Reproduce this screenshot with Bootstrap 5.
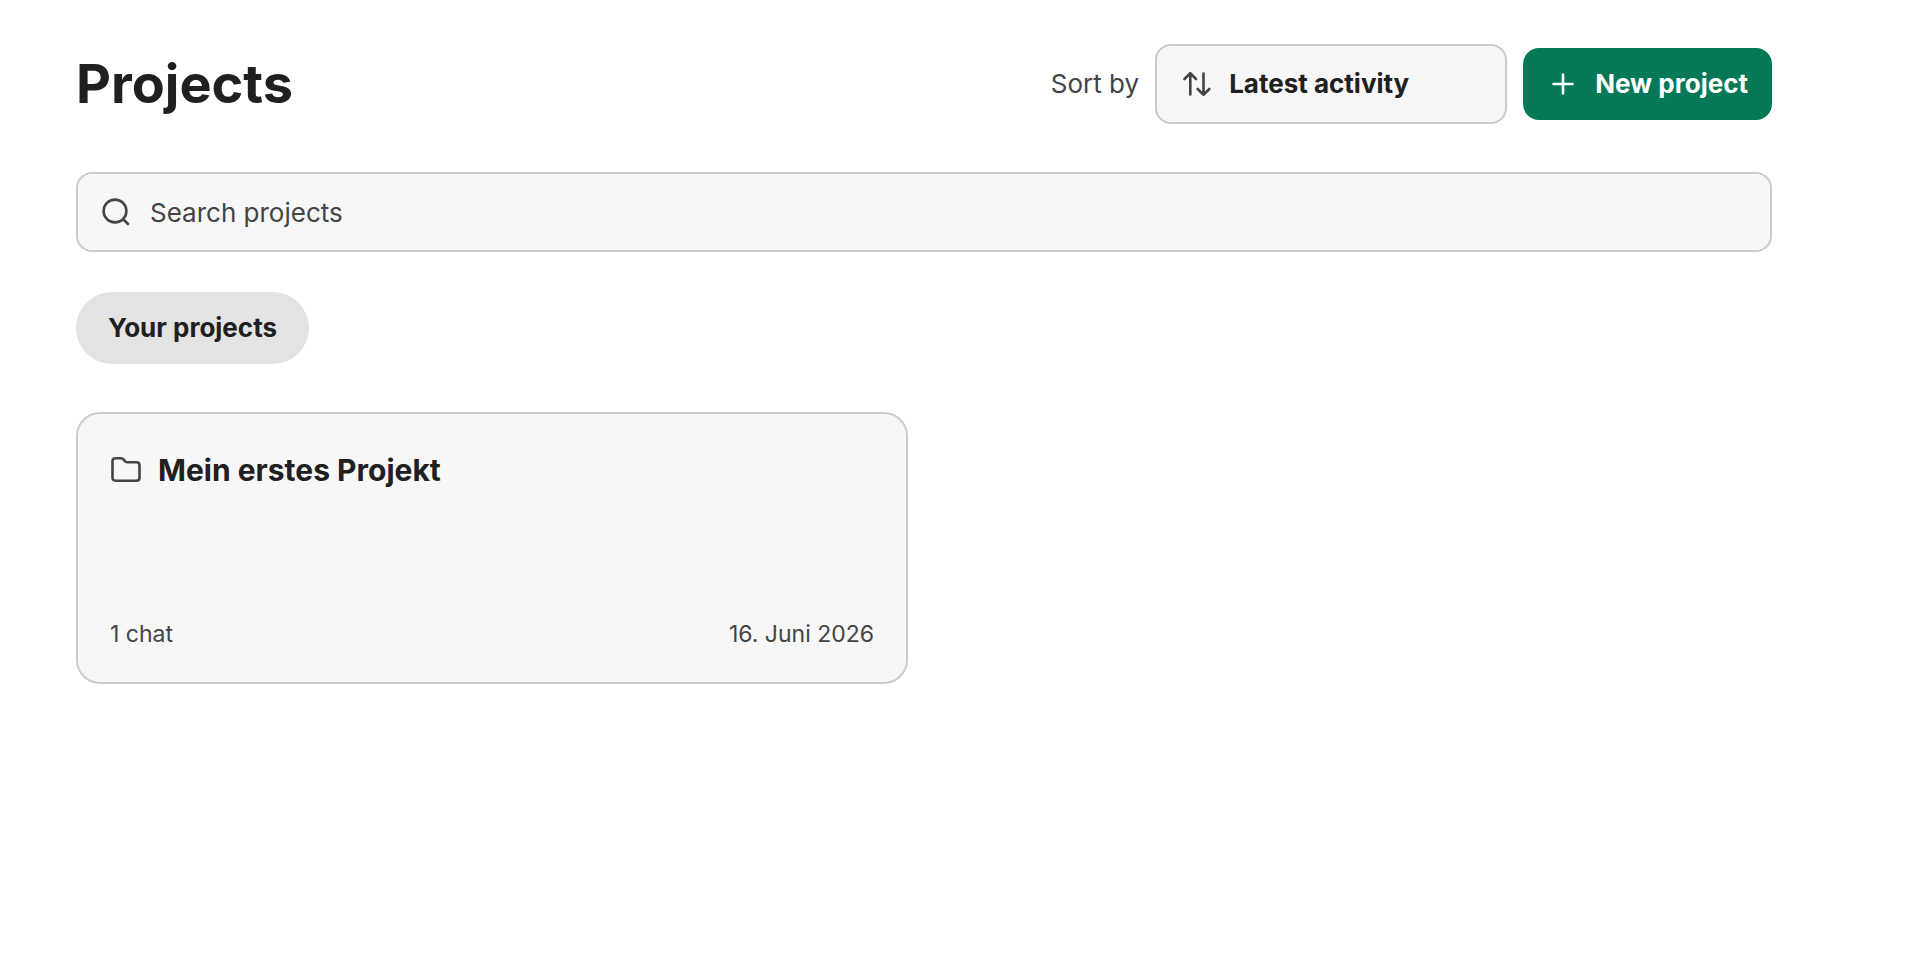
<!DOCTYPE html>
<html lang="en">
<head>
<meta charset="utf-8">
<meta name="viewport" content="width=device-width, initial-scale=1">
<title>Projects</title>
<link href="https://cdn.jsdelivr.net/npm/bootstrap@5.3.0/dist/css/bootstrap.min.css" rel="stylesheet">
<style>
  body { font-family: Inter, "Liberation Sans", sans-serif; font-size: 26px; line-height: 40px; color: #202020; background: #fff; }
  .page { padding: 44px 156px 44px 76px; }
  .page-title { font-size: 54px; line-height: 72px; font-weight: 700; }
  .muted { color: #444; }
  .field { position: relative; }
  .field svg { position: absolute; left: 24px; top: 24px; pointer-events: none; color: #444; }
  .field .form-control, .field .form-select {
    height: 80px; padding: 0 24px 0 72px; font-size: 26px; line-height: 40px;
    color: #202020; background: #f7f7f7; border: 2px solid #cacaca; border-radius: 16px;
  }
  .field .form-control::placeholder { color: #444; opacity: 1; }
  .field .form-select { width: 352px; font-weight: 700; }
  .btn-new { height: 72px; padding: 0 24px; font-size: 26px; line-height: 40px; font-weight: 700; border-radius: 16px;
    --bs-btn-color: #fff; --bs-btn-bg: #047857; --bs-btn-hover-color: #fff; --bs-btn-hover-bg: #03664a; --bs-btn-border-width: 0; }
  .btn-tab { height: 72px; padding: 0 32px; font-size: 26px; line-height: 40px; font-weight: 700;
    --bs-btn-color: #202020; --bs-btn-bg: #e3e3e3; --bs-btn-hover-bg: #d8d8d8; --bs-btn-border-width: 0; }
  .tabs { margin: 40px 0 48px; }
  .projects { --bs-gutter-x: 32px; }
  .project { min-height: 272px; padding: 32px; background: #f7f7f7; border: 2px solid #cacaca; border-radius: 24px; }
  .project-name { font-size: 30px; line-height: 48px; font-weight: 700; }
  .project-meta { font-size: 23px; line-height: 32px; }
  svg { fill: none; stroke: currentColor; stroke-width: 2.6; stroke-linecap: round; stroke-linejoin: round; flex: none; }
</style>
</head>
<body>
<main class="page">
  <header class="d-flex flex-wrap align-items-center justify-content-between gap-3 mb-5">
    <h1 class="page-title mb-0">Projects</h1>
    <div class="d-flex flex-wrap align-items-center gap-3">
      <label for="sort" class="muted">Sort by</label>
      <div class="field">
        <svg width="32" height="32" viewBox="0 0 32 32" aria-hidden="true"><path d="M5.500 11 11.300 5.200l5.700 5.800M11.300 5.500v21M24.500 5.500v21M18.700 21l5.800 5.700L30.300 21"/></svg>
        <select id="sort" class="form-select">
          <option>Latest activity</option>
          <option>Name</option>
        </select>
      </div>
      <button type="button" class="btn btn-new d-flex align-items-center gap-3">
        <svg width="32" height="32" viewBox="0 0 32 32" aria-hidden="true"><path d="M16 6.500v19M6.500 16h19"/></svg>New project
      </button>
    </div>
  </header>
  <div class="field">
    <svg width="32" height="32" viewBox="0 0 32 32" aria-hidden="true"><circle cx="15" cy="15" r="11.400"/><path d="m23.500 23.500 4.500 4.500"/></svg>
    <input type="search" class="form-control" placeholder="Search projects" aria-label="Search projects">
  </div>
  <div class="d-flex tabs">
    <button type="button" class="btn btn-tab rounded-pill">Your projects</button>
  </div>
  <div class="row row-cols-1 row-cols-lg-2 projects">
    <div class="col">
      <article class="project d-flex flex-column justify-content-between">
        <div class="d-flex align-items-center gap-3">
          <svg class="muted" width="32" height="32" viewBox="0 0 32 32" aria-hidden="true"><path d="M5.500 4.200h5.500q1.500 0 2.500 1.200l1.600 1.900q.8 1 2 1h9.400q3 0 3 3v12.400q0 3-3 3h-21q-3 0-3-3V7.200q0-3 3-3Z"/></svg>
          <h2 class="project-name mb-0">Mein erstes Projekt</h2>
        </div>
        <div class="project-meta muted d-flex justify-content-between">
          <span>1 chat</span><time datetime="2026-06-16">16. Juni 2026</time>
        </div>
      </article>
    </div>
  </div>
</main>
<script src="https://cdn.jsdelivr.net/npm/bootstrap@5.3.0/dist/js/bootstrap.bundle.min.js"></script>
</body>
</html>
